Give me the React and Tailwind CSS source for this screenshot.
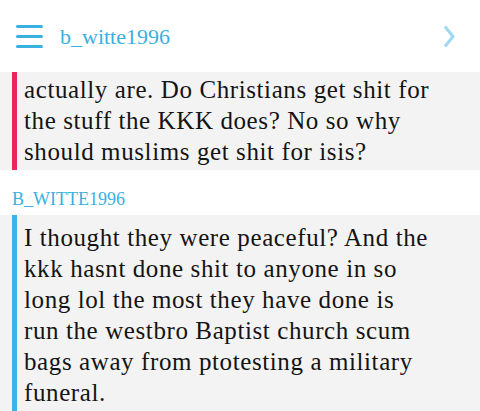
const serif = { fontFamily: '"Liberation Serif", "DejaVu Serif", serif' };

const Comment = ({ author, barColor, top, lines }) => (
  <div>
    {author && (
      <div className="px-3 pt-[19px] pb-[6px] text-[18px] leading-[20px] text-[#3ab0e0]" style={serif}>
        {author}
      </div>
    )}
    <div className="bg-[#f3f3f3] pl-3 flex">
      <div className={`w-[5px] shrink-0 ${barColor}`} />
      <div className={`pl-[7px] pr-2 ${top} pb-[3px] text-[25px] leading-[31px] tracking-[0.6px] text-[#141414]`} style={serif}>
        {lines.map((l, i) => (
          <div key={i} className="whitespace-nowrap">{l}</div>
        ))}
      </div>
    </div>
  </div>
);

export default function App() {
  return (
    <div className="w-[480px] h-[411px] overflow-hidden bg-white">
      <header className="h-[72px] flex items-center pl-4 pr-[25px]">
        <svg width="27" height="23" viewBox="0 0 27 23" className="shrink-0">
          <rect x="0" y="0" width="27" height="3" rx="1.5" fill="#3ab0e0" />
          <rect x="0" y="10" width="27" height="3" rx="1.5" fill="#3ab0e0" />
          <rect x="0" y="20" width="27" height="3" rx="1.5" fill="#3ab0e0" />
        </svg>
        <span className="ml-[17px] text-[22px] text-[#3ab0e0]" style={serif}>b_witte1996</span>
        <svg width="12" height="23" viewBox="0 0 12 23" className="ml-auto">
          <path d="M2 1.5 L10 11.5 L2 21.5" fill="none" stroke="#9ed8f2" strokeWidth="3" />
        </svg>
      </header>
      <Comment
        barColor="bg-[#e8285a]"
        top="pt-[2px]"
        lines={[
          "actually are. Do Christians get shit for",
          "the stuff the KKK does? No so why",
          "should muslims get shit for isis?",
        ]}
      />
      <Comment
        author="B_WITTE1996"
        barColor="bg-[#3ab4e6]"
        top="pt-[7px]"
        lines={[
          "I thought they were peaceful? And the",
          "kkk hasnt done shit to anyone in so",
          "long lol the most they have done is",
          "run the westbro Baptist church scum",
          "bags away from ptotesting a military",
          "funeral.",
        ]}
      />
    </div>
  );
}
